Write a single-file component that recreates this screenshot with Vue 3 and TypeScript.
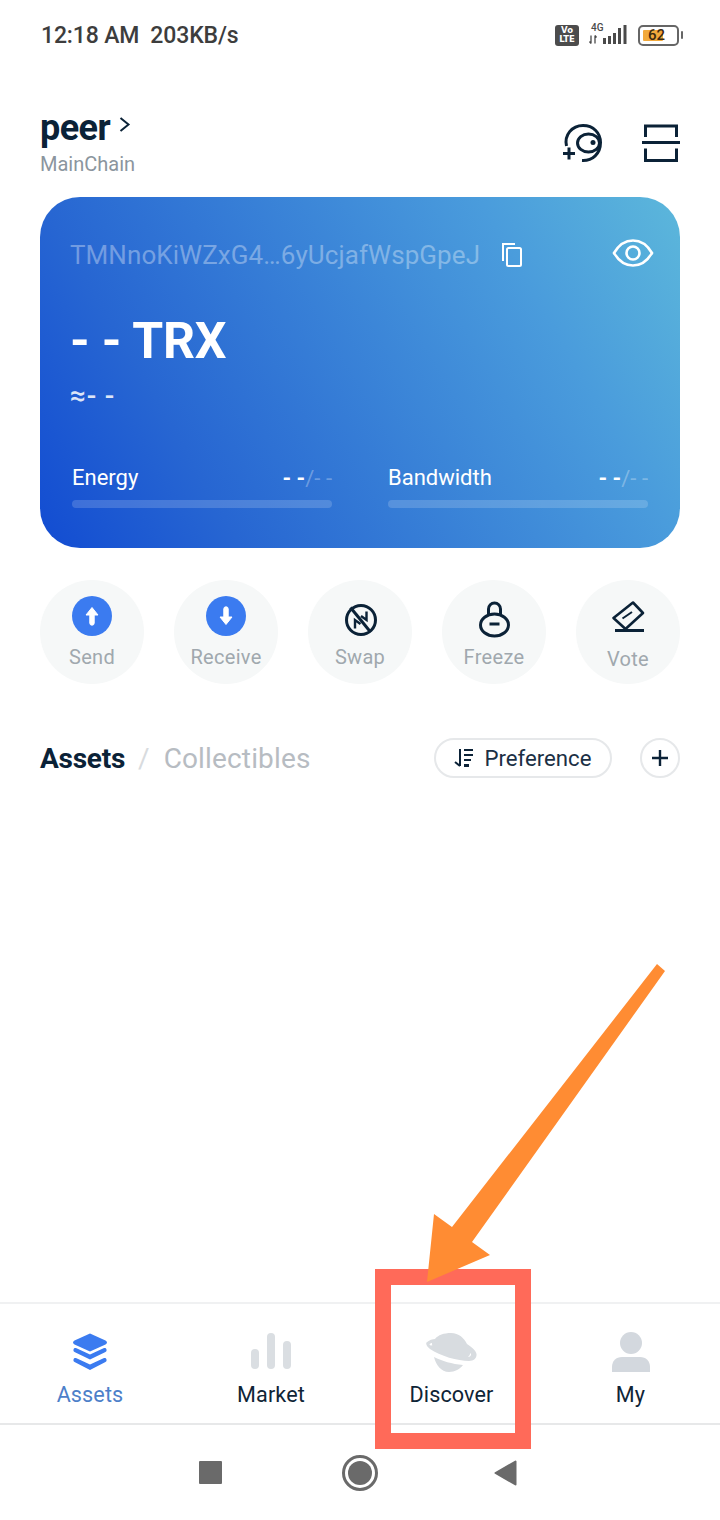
<script setup lang="ts">
const actions = [
  { label: 'Send', kind: 'send' },
  { label: 'Receive', kind: 'receive' },
  { label: 'Swap', kind: 'swap' },
  { label: 'Freeze', kind: 'freeze' },
  { label: 'Vote', kind: 'vote' },
]
const meters = [
  { label: 'Energy' },
  { label: 'Bandwidth' },
]
const navs = [
  { label: 'Assets', kind: 'assets' },
  { label: 'Market', kind: 'market' },
  { label: 'Discover', kind: 'discover' },
  { label: 'My', kind: 'my' },
]
</script>

<template>
  <div class="page">
    <div class="status">
      <div class="status-text">12:18 AM&nbsp;&nbsp;203KB/s</div>
      <div class="status-icons">
        <div class="volte">Vo<br />LTE</div>
        <svg class="signal" width="38" height="22" viewBox="0 0 38 22">
          <text x="2" y="7.500" class="fourg">4G</text>
          <path d="M2 12.500v8M.5 18.500l1.500 2M6 20.500v-8M6 12.500l1.500 2" stroke="#4a4a4a" stroke-width="1.300" fill="none" />
          <path d="M14 15h3v6h-3zM19 13h3v8h-3zM24 10h3v11h-3zM29 5h3v16h-3zM34.500 2h3v19h-3z" fill="#4a4a4a" />
        </svg>
        <div class="battery">
          <div class="battery-body"><span class="battery-fill"></span><span class="battery-num">62</span></div>
          <span class="battery-tip"></span>
        </div>
      </div>
    </div>

    <div class="header">
      <div>
        <div class="wallet-row">
          <span class="wallet">peer</span>
          <svg width="14" height="18" viewBox="0 0 14 18" class="chev"><path d="M2.500 2l8 6.500-8 6.500" fill="none" stroke="#0b2237" stroke-width="2" /></svg>
        </div>
        <div class="chain">MainChain</div>
      </div>
      <div class="header-icons">
        <svg width="42" height="42" viewBox="0 0 42 42" fill="none" stroke="#0b2237" stroke-width="3">
          <path d="M4.500 24C2 13 10 3.500 21 3.500c10.500 0 17.500 7.500 17.500 17 0 11-8 18.500-18.500 18" />
          <ellipse cx="26.500" cy="21" rx="11" ry="9" />
          <circle cx="31" cy="20.500" r="2.500" fill="#0b2237" stroke="none" />
          <path d="M1 31.500h12M7 25.500v12" />
        </svg>
        <svg width="38" height="38" viewBox="0 0 38 38" fill="none" stroke="#0b2237" stroke-width="3">
          <path d="M3.500 13V2h31v11M3.500 24.500v12h31v-12" />
          <path d="M0 18.500h38" />
        </svg>
      </div>
    </div>

    <section class="card">
      <div class="addr-row">
        <span class="addr">TMNnoKiWZxG4…6yUcjafWspGpeJ</span>
        <svg class="copy" width="22" height="26" viewBox="0 0 22 26" fill="none" stroke="#fff" stroke-width="2">
          <path d="M2 19V2h12" />
          <rect x="6" y="6" width="14" height="18" rx="1.500" />
        </svg>
        <svg class="eye" width="42" height="30" viewBox="0 0 42 30" fill="none" stroke="#fff" stroke-width="2.600">
          <path d="M2 15C7 6.500 13.500 2.500 21 2.500S35 6.500 40 15c-5 8.500-11.500 12.500-19 12.500S7 23.500 2 15z" />
          <circle cx="21" cy="15" r="6.500" />
        </svg>
      </div>
      <div class="balance">- - TRX</div>
      <div class="approx">≈- -</div>
      <div class="meters">
        <div v-for="m in meters" :key="m.label" class="meter">
          <div class="meter-top">
            <span class="meter-label">{{ m.label }}</span>
            <span class="meter-val">- -<span class="dim">/- -</span></span>
          </div>
          <div class="bar"></div>
        </div>
      </div>
    </section>

    <div class="actions">
      <div v-for="a in actions" :key="a.label" class="action">
        <svg v-if="a.kind === 'send'" class="ai" width="40" height="40" viewBox="0 0 40 40">
          <circle cx="20" cy="20" r="20" fill="#3b7bf0" />
          <path d="M20 11.500l6 7.500h-3.800v8a2.200 2.200 0 0 1-4.400 0v-8H14z" fill="#fff" stroke="#fff" stroke-linejoin="round" />
        </svg>
        <svg v-else-if="a.kind === 'receive'" class="ai" width="40" height="40" viewBox="0 0 40 40">
          <circle cx="20" cy="20" r="20" fill="#3b7bf0" />
          <path d="M20 28.500l-6-7.500h3.800v-8a2.200 2.200 0 0 1 4.400 0v8H26z" fill="#fff" stroke="#fff" stroke-linejoin="round" />
        </svg>
        <svg v-else-if="a.kind === 'swap'" class="ai" width="40" height="40" viewBox="0 0 40 40" fill="none" stroke="#0b2237" stroke-width="3">
          <circle cx="21" cy="24" r="14.500" />
          <path d="M10.500 11.500L30.500 36" />
          <path d="M26.500 15.500v8.500l-5.500-4M15 32.500v-8.500l5.500 4" stroke-width="2.400" />
        </svg>
        <svg v-else-if="a.kind === 'freeze'" class="ai" width="40" height="40" viewBox="0 0 40 40" fill="none" stroke="#0b2237" stroke-width="3">
          <ellipse cx="20.500" cy="29" rx="14" ry="11" />
          <path d="M14.500 18.500V13a6 6 0 0 1 12 0v5.500" />
          <path d="M15.500 28h10" />
        </svg>
        <svg v-else class="ai" width="40" height="40" viewBox="0 0 40 40" fill="none" stroke="#0b2237" stroke-width="2.600">
          <path d="M5.500 22L25 6.500 35 17 17.500 33z" stroke-linejoin="round" />
          <path d="M14.500 22.500L24 16" stroke-width="2" />
          <path d="M7 34.500h29" stroke-width="3" />
        </svg>
        <span class="action-label" :class="{ 'vote-l': a.kind === 'vote' }">{{ a.label }}</span>
      </div>
    </div>

    <div class="tabs">
      <span class="tab-on">Assets</span>
      <span class="slash">/</span>
      <span class="tab-off">Collectibles</span>
      <div class="pref">
        <svg width="20" height="20" viewBox="0 0 20 20" fill="none" stroke="#0b2237" stroke-width="2">
          <path d="M6 1v17M1 14l5 4" />
          <path d="M10 2h9M10 7h9M10 12h7" />
          <path d="M10 17.500h5" stroke-width="3" />
        </svg>
        <span>Preference</span>
      </div>
      <div class="plus">
        <svg width="18" height="18" viewBox="0 0 18 18" stroke="#0b2237" stroke-width="2.400"><path d="M1 9h16M9 1v16" /></svg>
      </div>
    </div>

    <div class="spacer"></div>

    <nav class="tabbar">
      <div v-for="n in navs" :key="n.label" class="nav-item">
        <svg v-if="n.kind === 'assets'" width="36" height="40" viewBox="0 0 36 40" fill="#3b7bf0">
          <path d="M18 1.500l15.500 7c2 1 2 3 0 4L18 19.500 2.500 12.500c-2-1-2-3 0-4z" />
          <path d="M1.500 17.500c.5-1.500 1.800-1.800 3-1.200L18 22.500l13.500-6.200c1.200-.6 2.500-.3 3 1.200.3 1.300-.2 2.200-1.500 2.800L18 27.500 3 20.300c-1.300-.6-1.800-1.500-1.500-2.800z" />
          <path d="M1.500 27.500c.5-1.500 1.800-1.800 3-1.200L18 32.500l13.500-6.200c1.200-.6 2.500-.3 3 1.200.3 1.300-.2 2.200-1.500 2.800L18 38 3 30.300c-1.300-.6-1.800-1.500-1.500-2.800z" />
        </svg>
        <svg v-else-if="n.kind === 'market'" width="40" height="40" viewBox="0 0 40 40" fill="#dadee2">
          <rect x="0" y="17" width="8" height="20" rx="4" />
          <rect x="16" y="1" width="8" height="36" rx="4" />
          <rect x="32" y="9" width="8" height="28" rx="4" />
        </svg>
        <svg v-else-if="n.kind === 'discover'" width="52" height="40" viewBox="0 -1 52 40" fill="#d8dce0">
          <path d="M.5 9.500C3 7 7 6 9 6c3-4 9-6 16-6 8 0 13 5 16 11 5 3 9 7 9.500 10 .5 4-2.500 7-7.500 7-11 0-29-5-39-12C1 14-.5 11 .5 9.500z" />
          <path d="M8 24c8 4 18 7 29 8-3 4-8 7-14 7-8 0-13-7-15-15z" />
          <path d="M3.500 11.500c.5-1 1.500-1.500 2.500-1.500-.3 1 0 1.500.5 2.300-1.200.3-2.500.2-3-.8zM42 24c1 0 2.500-.5 3-2 .2-1-.2-1.500-.8-2 0 1.500-1 3-2.200 4z" fill="#fff" />
        </svg>
        <svg v-else width="40" height="40" viewBox="0 0 40 40" fill="#d3d8de">
          <circle cx="20" cy="11" r="11" />
          <path d="M1 40V35c0-6 4-10 10-10h18c6 0 10 4 10 10v5z" />
        </svg>
        <span class="nav-label" :class="{ active: n.kind === 'assets' }">{{ n.label }}</span>
      </div>
    </nav>

    <div class="sysbar">
      <span class="sys-square"></span>
      <span class="sys-circle"><span></span></span>
      <svg class="sys-back" width="23" height="26" viewBox="0 0 23 26"><path d="M21.500 1.500v23L1.500 13z" fill="#6a6a6a" stroke="#6a6a6a" stroke-linejoin="round" stroke-width="2" /></svg>
    </div>

    <svg class="arrow" width="720" height="1520" viewBox="0 0 720 1520">
      <path d="M657 964L665 971 472 1242 490 1255 427 1282 434 1214 452 1227z" fill="#ff8c33" />
    </svg>
    <div class="highlight"></div>
  </div>
</template>

<style>
html, body { margin: 0; background: #fff; }
</style>

<style scoped>
.page {
  position: relative;
  width: 720px;
  height: 1520px;
  background: #fff;
  overflow: hidden;
  display: flex;
  flex-direction: column;
  font-family: Roboto, "Liberation Sans", sans-serif;
  color: #0b2237;
}
.status {
  height: 70px;
  flex: none;
  display: flex;
  align-items: center;
  justify-content: space-between;
  padding: 0 37px 0 41px;
}
.status-text {
  font-size: 23px;
  font-weight: 500;
  color: #3d3d3d;
  letter-spacing: -.15px;
}
.status-icons { display: flex; align-items: center; }
.volte {
  width: 24px;
  height: 21px;
  border-radius: 3px;
  background: #4c4c4c;
  color: #fff;
  font-family: "DejaVu Sans", sans-serif;
  font-size: 8.500px;
  line-height: 9px;
  font-weight: 700;
  text-align: center;
  padding-top: 1px;
  box-sizing: border-box;
  margin-right: 10px;
}
.signal { margin-right: 11px; margin-top: -2px; overflow: visible; }
.fourg {
  font-family: Roboto, sans-serif;
  font-size: 10px;
  font-weight: 500;
  fill: #4a4a4a;
}
.battery { display: flex; align-items: center; gap: 2px; }
.battery-body {
  position: relative;
  width: 41px;
  height: 21px;
  box-sizing: border-box;
  border: 2.500px solid #666;
  border-radius: 5px;
}
.battery-fill {
  position: absolute;
  left: 3px;
  top: 3px;
  bottom: 3px;
  width: 20px;
  background: #f2a93b;
  border-radius: 1px;
}
.battery-num {
  position: absolute;
  left: 8px;
  top: 0;
  font-size: 15px;
  line-height: 16px;
  color: #3b2a10;
  font-weight: 500;
}
.battery-tip { width: 2px; height: 8px; background: #666; border-radius: 1px; }
.header {
  height: 127px;
  flex: none;
  box-sizing: border-box;
  padding: 38px 40px 0;
  display: flex;
  justify-content: space-between;
  align-items: flex-start;
}
.wallet-row { display: flex; align-items: flex-start; gap: 8px; height: 40px; }
.wallet {
  font-size: 36px;
  line-height: 40px;
  font-weight: 700;
  color: #0b2237;
  letter-spacing: -.55px;
}
.chev { margin-top: 8px; }
.chain {
  font-size: 20px;
  line-height: 24px;
  color: #8b959e;
  margin-top: 4px;
}
.header-icons { display: flex; align-items: center; gap: 38px; margin-top: 14px; }
.card {
  flex: none;
  width: 640px;
  height: 351px;
  margin: 0 40px;
  box-sizing: border-box;
  border-radius: 40px;
  padding: 40px 32px 0 30px;
  background: linear-gradient(60deg, #124cd2 0%, #2766d2 24%, #4a9cdc 76%, #5cb7db 100%);
  color: #fff;
}
.addr-row { display: flex; align-items: center; height: 36px; }
.addr {
  font-size: 26px;
  line-height: 36px;
  letter-spacing: .07px;
  color: rgba(255, 255, 255, .35);
  white-space: nowrap;
  width: 431px;
  flex: none;
}
.copy { flex: none; margin-top: -1px; }
.eye { flex: none; margin-left: auto; margin-right: -6px; margin-top: -4px; }
.balance {
  margin-top: 38px;
  font-size: 50px;
  line-height: 60px;
  font-weight: 700;
  letter-spacing: -.2px;
  white-space: pre;
}
.approx {
  margin-top: 10px;
  font-size: 28px;
  line-height: 30px;
  font-weight: 500;
  letter-spacing: .8px;
  color: rgba(255,255,255,.85);
}
.meters {
  display: grid;
  grid-template-columns: 260px 260px;
  gap: 56px;
  margin-top: 52px;
  padding-left: 2px;
}
.meter-top {
  display: flex;
  justify-content: space-between;
  align-items: center;
  height: 30px;
}
.meter-label { font-size: 22px; line-height: 30px; color: #fff; }
.meter-val { font-size: 22px; font-weight: 700; color: #fff; white-space: nowrap; }
.dim { color: rgba(255,255,255,.3); font-weight: 400; }
.bar {
  height: 8px;
  margin-top: 7px;
  border-radius: 4px;
  background: rgba(255,255,255,.17);
}
.actions {
  flex: none;
  display: flex;
  justify-content: space-between;
  padding: 32px 40px 0;
}
.action {
  width: 104px;
  height: 104px;
  border-radius: 50%;
  background: #f6f8f8;
  display: flex;
  flex-direction: column;
  align-items: center;
  box-sizing: border-box;
  padding-top: 16px;
}
.ai { flex: none; overflow: visible; }
.action-label {
  margin-top: 9px;
  font-size: 20px;
  line-height: 24px;
  letter-spacing: .3px;
  color: #a0a8ae;
}
.vote-l { margin-top: 11px; }
.tabs {
  flex: none;
  display: flex;
  align-items: center;
  margin: 53px 40px 0;
  height: 42px;
}
.tab-on { font-size: 28px; font-weight: 700; color: #0b2237; letter-spacing: -.25px; }
.slash { font-size: 28px; color: #d8dbde; margin: 0 14px 0 13px; }
.tab-off { font-size: 28px; color: #b7bcc2; letter-spacing: .15px; }
.pref {
  margin-left: auto;
  width: 178px;
  height: 40px;
  box-sizing: border-box;
  border: 2px solid #e6e8ea;
  border-radius: 20px;
  display: flex;
  align-items: center;
  justify-content: center;
  gap: 10px;
  font-size: 22.200px;
  color: #1b3045;
}
.plus {
  margin-left: 28px;
  width: 40px;
  height: 40px;
  box-sizing: border-box;
  border: 2px solid #e6e8ea;
  border-radius: 50%;
  display: flex;
  align-items: center;
  justify-content: center;
}
.spacer { flex: 1; }
.tabbar {
  flex: none;
  height: 123px;
  box-sizing: border-box;
  border-top: 2px solid #f0f1f2;
  border-bottom: 2px solid #e7e8e9;
  display: grid;
  grid-template-columns: 180px 182px 179px 179px;
}
.nav-item {
  display: flex;
  flex-direction: column;
  align-items: center;
  padding-top: 28px;
  box-sizing: border-box;
}
.nav-item svg { flex: none; height: 40px; }
.nav-label {
  margin-top: 9px;
  font-size: 21.600px;
  line-height: 28px;
  letter-spacing: .1px;
  color: #0f2436;
}
.nav-label.active { color: #4d7fc9; }
.sysbar {
  flex: none;
  height: 95px;
  display: flex;
  align-items: center;
  justify-content: center;
  box-sizing: border-box;
  padding-right: 4px;
}
.sys-square { width: 23px; height: 23px; background: #6a6a6a; border-radius: 1px; margin-right: 120px; }
.sys-circle {
  width: 36px;
  height: 36px;
  box-sizing: border-box;
  border: 3px solid #6a6a6a;
  border-radius: 50%;
  display: flex;
  align-items: center;
  justify-content: center;
  margin-right: 116px;
}
.sys-circle span { width: 24px; height: 24px; border-radius: 50%; background: #6a6a6a; }
.sys-back { flex: none; }
.arrow { position: absolute; left: 0; top: 0; pointer-events: none; z-index: 2; }
.highlight {
  position: absolute;
  left: 375px;
  top: 1269px;
  width: 156px;
  height: 180px;
  box-sizing: border-box;
  border: 16px solid #ff6a59;
  z-index: 1;
}
</style>
